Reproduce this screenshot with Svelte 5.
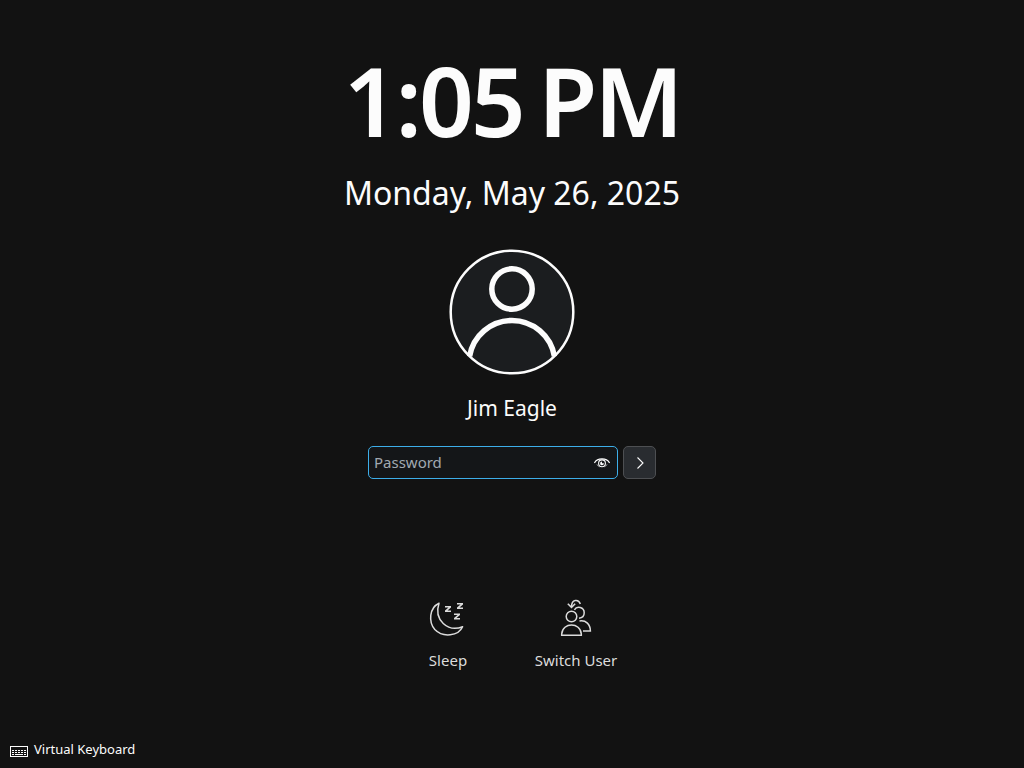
<script>
  const time = '1:05 PM';
  const date = 'Monday, May 26, 2025';
  const user = 'Jim Eagle';
  let password = $state('');
</script>

<main class="screen">
  <header class="clock">
    <div class="time">{time}</div>
    <div class="date">{date}</div>
  </header>

  <section class="login">
    <svg class="avatar" viewBox="0 0 126 126" fill="none" stroke="#fcfcfc">
      <circle cx="63" cy="63" r="61.3" fill="#1b1d1f" stroke-width="2.5" />
      <circle cx="63" cy="40" r="20.2" stroke-width="5.5" />
      <path d="M20.6 107.3 A43 43 0 0 1 105.4 107.3" stroke-width="5.5" />
    </svg>
    <div class="name">{user}</div>
    <form class="prompt" onsubmit={(e) => e.preventDefault()}>
      <div class="field">
        <input type="password" placeholder="Password" aria-label="Password" bind:value={password} />
        <svg class="eye" width="16" height="16" viewBox="0 0 16 16" fill="none" stroke="#fcfcfc">
          <path d="M.4 8 C3.3 2.6 12.7 2.6 15.6 8" stroke-width="1.3" />
          <path d="M3 9.4 C3.8 10.9 4.5 11.3 5.5 11.8 M13 9.4 C12.2 10.9 11.5 11.3 10.5 11.8" stroke-width=".6" />
          <circle cx="8" cy="8.3" r="3.4" stroke-width="1.1" />
          <path d="M8 6.5 V8.3 H9.9 A1.9 1.9 0 1 1 8 6.5Z" fill="#fcfcfc" stroke="none" />
        </svg>
      </div>
      <button class="submit" aria-label="Log in">
        <svg width="16" height="16" viewBox="0 0 16 16" fill="none" stroke="#fcfcfc" stroke-width="1.1">
          <path d="M5.5 2.5 L11 8 L5.5 13.5" />
        </svg>
      </button>
    </form>
  </section>

  <nav class="actions">
    <button class="action">
      <svg width="48" height="48" viewBox="0 0 48 48" fill="none" stroke="#dcdcdc" stroke-width="1.5">
        <path d="M15 9.2 C5 13.8 4.5 28.5 10.8 35.5 C19 44 34.5 42 38.6 32.7 C24 38.5 9.5 26 15 9.2Z" stroke-linejoin="round" />
        <path d="M21 12 H27 V13.5 L23.5 16.5 H27 V18 H21 V16.5 L24.5 13.5 H21Z M33 9 H39 V10.5 L35.5 13.5 H39 V15 H33 V13.5 L36.5 10.5 H33Z M30 19.5 H36 V21 L32.5 24 H36 V25.5 H30 V24 L33.5 21 H30Z" fill="#dcdcdc" stroke="none" />
      </svg>
      <span>Sleep</span>
    </button>
    <button class="action">
      <svg width="48" height="48" viewBox="0 0 48 48" fill="none" stroke="#dcdcdc" stroke-width="1.5">
        <circle cx="19.5" cy="22.5" r="5.3" />
        <path d="M9.7 41.2 V40 C10.5 28 28.5 28 29.3 40 V41.2Z" />
        <path d="M22.4 15.9 C25 11.3 32.2 13.3 32.2 18.8 C32.2 22 30 24 27 24.2" />
        <path d="M27.5 27 C34 26 38.4 30.3 38.4 37 H31" />
        <path d="M28.3 10 C26.5 4.8 19.5 5 19.5 13" />
        <path d="M15.8 9.7 L19.5 13.4 L23.2 9.7" />
      </svg>
      <span>Switch User</span>
    </button>
  </nav>

  <footer>
    <button class="keyboard">
      <svg width="18" height="11" viewBox="0 0 18 11" fill="none" stroke="#fcfcfc" shape-rendering="crispEdges">
        <path d="M.5 .5 H17.5 V10.5 H.5Z" />
        <path d="M2 4.5 H16 M2 6.5 H16" stroke-dasharray="2 1" />
        <path d="M2 8.5 H4 M5 8.5 H13 M14 8.5 H16" />
      </svg>
      <span>Virtual Keyboard</span>
    </button>
  </footer>
</main>

<style>
  :global(body) {
    background: #121212;
  }
  .screen {
    box-sizing: border-box;
    height: 100vh;
    display: flex;
    flex-direction: column;
    align-items: center;
    background: #121212;
    color: #fcfcfc;
    font-family: 'Noto Sans', sans-serif;
    overflow: hidden;
  }
  button {
    font: inherit;
    color: inherit;
    background: none;
    border: 0;
    padding: 0;
  }
  svg {
    display: block;
    flex: none;
  }
  .clock {
    display: flex;
    flex-direction: column;
    align-items: center;
    padding-top: 34px;
    white-space: nowrap;
  }
  .time {
    font-size: 96px;
    font-weight: 600;
    line-height: 131px;
    letter-spacing: -3px;
    word-spacing: -6.5px;
  }
  .date {
    font-size: 32px;
    line-height: 44px;
    margin-top: 6px;
  }
  .login {
    display: flex;
    flex-direction: column;
    align-items: center;
    margin-top: 34px;
  }
  .avatar {
    width: 126px;
    height: 126px;
  }
  .name {
    font-size: 21px;
    line-height: 30px;
    margin-top: 18px;
  }
  .prompt {
    display: flex;
    gap: 5px;
    margin-top: 23px;
  }
  .field {
    box-sizing: border-box;
    width: 250px;
    height: 33px;
    display: flex;
    align-items: center;
    padding: 0 7px 0 5px;
    border: 1px solid #3daee9;
    border-radius: 5px;
    background: #141618;
  }
  input {
    flex: 1;
    min-width: 0;
    height: 29px;
    padding: 0 0 2px;
    box-sizing: border-box;
    border: 0;
    outline: 0;
    background: none;
    color: #fcfcfc;
    font: 15px 'Noto Sans', sans-serif;
  }
  input::placeholder {
    color: #a1a9b1;
    opacity: 1;
  }
  .submit {
    box-sizing: border-box;
    width: 33px;
    height: 33px;
    display: flex;
    align-items: center;
    justify-content: center;
    border: 1px solid #4d4f52;
    border-radius: 5px;
    background: #292c30;
  }
  .actions {
    display: flex;
    margin-top: 115px;
  }
  .action {
    width: 128px;
    display: flex;
    flex-direction: column;
    align-items: center;
    gap: 7px;
    font-size: 15px;
    line-height: 22px;
    color: #dcdcdc;
  }
  footer {
    align-self: stretch;
    margin-top: auto;
    padding: 0 0 9px 10px;
  }
  .keyboard {
    display: flex;
    align-items: center;
    gap: 6px;
    font-size: 13px;
    line-height: 20px;
  }
  .keyboard svg {
    margin-top: 4px;
  }
</style>
